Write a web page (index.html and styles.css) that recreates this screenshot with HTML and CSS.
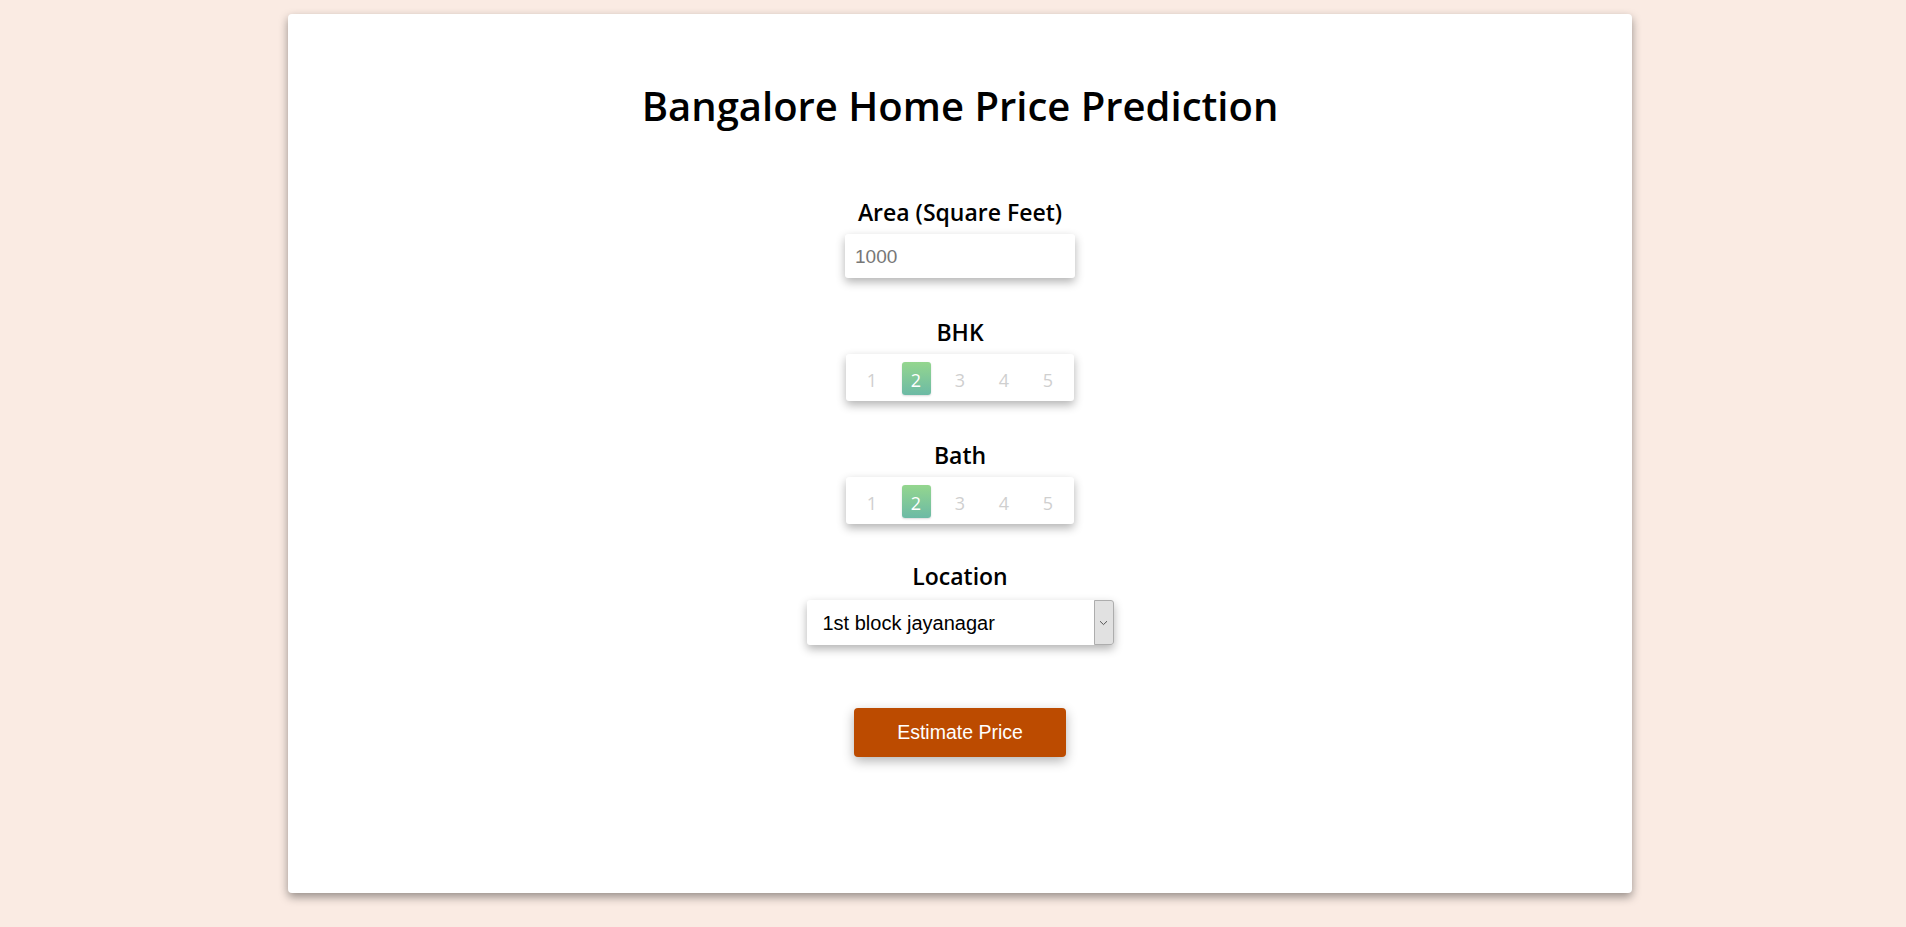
FILE: index.html
```html
<!DOCTYPE html>
<html lang="en">
<head>
<meta charset="utf-8">
<title>Bangalore Home Price Prediction</title>
<link rel="stylesheet" href="styles.css">
</head>
<body>
<div class="card">
  <h1 class="title">Bangalore Home Price Prediction</h1>
  <form class="form">
    <div class="group">
      <label class="label" for="sqft">Area (Square Feet)</label>
      <input class="area" id="sqft" type="text" placeholder="1000">
    </div>
    <div class="group">
      <div class="label">BHK</div>
      <div class="rating">
        <span class="opt">1</span>
        <span class="opt active">2</span>
        <span class="opt">3</span>
        <span class="opt">4</span>
        <span class="opt">5</span>
      </div>
    </div>
    <div class="group group-bath">
      <div class="label">Bath</div>
      <div class="rating">
        <span class="opt">1</span>
        <span class="opt active">2</span>
        <span class="opt">3</span>
        <span class="opt">4</span>
        <span class="opt">5</span>
      </div>
    </div>
    <div class="group group-last">
      <label class="label label-loc" for="loc">Location</label>
      <div class="select-wrap">
        <select class="select" id="loc">
          <option>1st block jayanagar</option>
        </select>
        <span class="select-btn">
          <svg width="9" height="6" viewBox="0 0 9 6"><path d="M1 1.2 L4.5 4.6 L8 1.2" fill="none" stroke="#555" stroke-width="1"/></svg>
        </span>
      </div>
    </div>
    <button class="submit" type="button">Estimate Price</button>
  </form>
</div>
</body>
</html>
```
FILE: styles.css
```css
html, body {
  margin: 0;
  padding: 0;
}
body {
  background: #faebe3;
  font-family: "Open Sans", "Liberation Sans", sans-serif;
  padding-top: 14px;
  height: 927px;
  box-sizing: border-box;
  overflow: hidden;
}
.card {
  width: 1344px;
  height: 879px;
  margin: 0 0 0 288px;
  background: #fff;
  border-radius: 4px;
  box-shadow: 0 4px 10px rgba(0, 0, 0, 0.4);
  box-sizing: border-box;
  padding-top: 66px;
  display: flex;
  flex-direction: column;
  align-items: center;
}
.title {
  margin: 0;
  font-size: 40px;
  font-weight: 600;
  line-height: 52px;
  color: #000;
}
.form {
  margin-top: 67px;
  display: flex;
  flex-direction: column;
  align-items: center;
}
.group {
  display: flex;
  flex-direction: column;
  align-items: center;
  margin-bottom: 41px;
}
.group-bath {
  margin-bottom: 39px;
}
.group-last {
  margin-bottom: 0;
}
.label {
  font-size: 23px;
  font-weight: 600;
  line-height: 27px;
  color: #000;
  margin-bottom: 8px;
}
.label-loc {
  margin-bottom: 10px;
}
.area {
  width: 230px;
  height: 44px;
  box-sizing: border-box;
  border: none;
  border-radius: 3px;
  padding: 2px 10px 0;
  font-family: "Liberation Sans", Arial, sans-serif;
  font-size: 19px;
  color: #333;
  background: #fff;
  box-shadow: 0 4px 10px rgba(0, 0, 0, 0.3);
  outline: none;
}
.area::placeholder {
  color: #777;
}
.rating {
  width: 228px;
  height: 47px;
  box-sizing: border-box;
  padding: 8px 4px 4px;
  display: flex;
  border-radius: 3px;
  background: #fff;
  box-shadow: 0 4px 10px rgba(0, 0, 0, 0.3);
}
.opt {
  width: 44px;
  height: 33px;
  display: flex;
  justify-content: center;
  font-size: 18px;
  line-height: 36px;
  color: #cfcfcf;
}
.opt.active {
  color: #fff;
}
.rating .opt.active {
  width: 29px;
  margin: 0 7.5px;
  border-radius: 3px;
  background: linear-gradient(to bottom, #94d68e, #6cbaa5);
  box-shadow: 0 1px 2px rgba(0, 0, 0, 0.15);
}
.select-wrap {
  display: flex;
  width: 307px;
  height: 45px;
  border-radius: 3px;
  background: #fff;
  box-shadow: 0 4px 10px rgba(0, 0, 0, 0.3);
}
.select {
  flex: 1;
  appearance: none;
  -webkit-appearance: none;
  border: none;
  background: transparent;
  padding: 0 0 0 16px;
  font-family: "Liberation Sans", Tahoma, sans-serif;
  font-size: 20px;
  color: #000;
  outline: none;
}
.select-btn {
  width: 18px;
  display: flex;
  align-items: center;
  justify-content: center;
  background: #e1e1e1;
  border: 1px solid #adadad;
  border-radius: 0 3px 3px 0;
}
.submit {
  margin-top: 63px;
  width: 212px;
  height: 49px;
  border: none;
  border-radius: 4px;
  background: #bc4b00;
  color: #fff;
  font-family: "Liberation Sans", Tahoma, sans-serif;
  font-size: 19.5px;
  box-shadow: 0 4px 12px rgba(0, 0, 0, 0.3);
  cursor: pointer;
}
```
